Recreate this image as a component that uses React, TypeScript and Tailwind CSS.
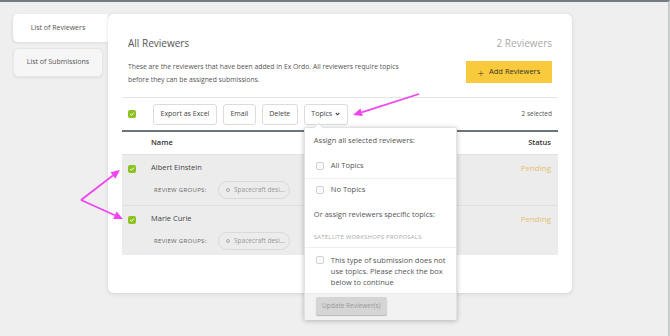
import React from 'react'

const font = "font-['Open_Sans',sans-serif]"

function GreenCheck() {
  return (
    <span className="flex h-[8px] w-[8px] items-center justify-center rounded-[2px] bg-[#8cc21f]">
      <svg width="6" height="6" viewBox="0 0 6 6">
        <path d="M1.2 3.1 L2.5 4.3 L4.9 1.6" stroke="white" strokeWidth="1" fill="none" />
      </svg>
    </span>
  )
}

function EmptyBox() {
  return <span className="block h-[8px] w-[8px] shrink-0 rounded-[2px] border border-[#cfcfcf] bg-white" />
}

function ToolButton({ children }: { children: React.ReactNode }) {
  return (
    <div className="flex h-[21px] items-center rounded-[3px] border border-[#dcdcdc] bg-white px-[6.5px] text-[7px] text-[#444]">
      {children}
    </div>
  )
}

function ReviewerRow({ name, first }: { name: string; first?: boolean }) {
  return (
    <div className={`flex h-[50px] bg-[#ececec] ${first ? '' : 'border-t border-[#e0e0e0]'}`}>
      <div className="w-[29px] pl-[6px] pt-[10px]">
        <GreenCheck />
      </div>
      <div className="flex-1">
        <div className="flex h-[26px] items-center text-[7.5px] text-[#444]">{name}</div>
        <div className="flex items-center pl-[3px]">
          <span className="w-[64px] text-[6px] tracking-[0.3px] text-[#666]">REVIEW GROUPS:</span>
          <span className="flex h-[18px] w-[72px] items-center gap-[4px] rounded-full border border-[#dadada] pl-[7px] text-[6.5px] text-[#999]">
            <span className="h-[4px] w-[4px] rounded-full border border-[#aaa]" />
            Spacecraft desi...
          </span>
        </div>
      </div>
      <div className="flex h-[26px] items-center pr-[7px] text-[8px] text-[#e6bf70]">Pending</div>
    </div>
  )
}

function TopicsMenu() {
  return (
    <div className="absolute left-0 top-full z-10 mt-[2px] h-[193px] w-[153px] rounded-[2px] border border-[#e2e2e2] bg-white shadow-[0_1px_5px_rgba(0,0,0,0.25)]">
      <span className="absolute -top-[4px] left-[10px] h-[7px] w-[7px] rotate-45 border-l border-t border-[#e2e2e2] bg-white" />
      <div className="flex h-[27px] items-center pl-[9px] text-[7.5px] text-[#555]">Assign all selected reviewers:</div>
      <div className="flex h-[24px] items-center gap-[7px] border-b border-[#f0f0f0] pl-[11px] text-[7.5px] text-[#555]">
        <EmptyBox />
        All Topics
      </div>
      <div className="flex h-[22px] items-center gap-[7px] pl-[11px] text-[7.5px] text-[#555]">
        <EmptyBox />
        No Topics
      </div>
      <div className="flex h-[28px] items-center pl-[9px] text-[7.5px] text-[#555]">Or assign reviewers specific topics:</div>
      <div className="flex h-[19px] items-center border-b border-[#eeeeee] pl-[9px] text-[6px] tracking-[0.2px] text-[#aaa]">
        SATELLITE WORKSHOPS PROPOSALS
      </div>
      <div className="flex h-[45px] gap-[7px] pl-[11px] pt-[7px]">
        <span className="mt-[1px]">
          <EmptyBox />
        </span>
        <p className="w-[115px] text-[7.5px] leading-[11px] text-[#555]">
          This type of submission does not use topics. Please check the box below to continue
        </p>
      </div>
      <div className="h-[27px] border-t border-[#ececec] bg-[#f2f2f2] pl-[11px] pt-[3px]">
        <div className="flex h-[18px] w-[71px] items-center justify-center rounded-[2px] bg-[#d5d5d5] text-[6.5px] text-[#999] shadow-[0_1px_1px_rgba(0,0,0,0.25)]">
          Update Reviewer(s)
        </div>
      </div>
    </div>
  )
}

function Arrows() {
  const c = '#f044f0'
  return (
    <svg className="pointer-events-none absolute left-0 top-0" width="670" height="336">
      <line x1="419" y1="92" x2="361.6" y2="110.3" stroke={c} strokeWidth="1.8" />
      <polygon points="353,113 362.8,114.1 360.4,106.5" fill={c} />
      <line x1="81" y1="198" x2="112.9" y2="173.5" stroke={c} strokeWidth="1.8" />
      <polygon points="120,168 115.3,176.7 110.5,170.3" fill={c} />
      <line x1="81" y1="198" x2="114.8" y2="213.3" stroke={c} strokeWidth="1.8" />
      <polygon points="123,217 113.2,216.9 116.5,209.6" fill={c} />
    </svg>
  )
}

export default function App() {
  return (
    <div className={`relative h-[336px] w-[670px] overflow-hidden border-r-2 border-t-2 border-r-[#c9cccd] border-t-[#737b80] bg-[#efefef] ${font}`}>
      <div className="flex items-start pl-[13px] pt-[12px]">
        <div className="flex w-[95px] flex-col">
          <div className="flex h-[28px] items-center justify-center rounded-l-[5px] bg-white pr-[5px] text-[7px] text-[#555] shadow-[-1px_1px_3px_rgba(0,0,0,0.08)]">
            List of Reviewers
          </div>
          <div className="mt-[6px] flex h-[29px] w-[90px] items-center justify-center rounded-[5px] border border-[#e6e6e6] bg-[#f6f6f6] text-[7px] text-[#555] shadow-[0_1px_2px_rgba(0,0,0,0.08)]">
            List of Submissions
          </div>
        </div>

        <div className="h-[279px] w-[464px] rounded-[6px] bg-white px-[14px] shadow-[0_1px_4px_rgba(0,0,0,0.12)]">
          <div className="h-[84px] border-b border-[#e6e6e6] px-[6px]">
            <div className="flex justify-between pt-[22px] text-[10px] leading-[14px]">
              <span className="text-[#555]">All Reviewers</span>
              <span className="text-[#aaa]">2 Reviewers</span>
            </div>
            <div className="mt-[10px] flex items-start justify-between">
              <p className="w-[285px] text-[6.8px] leading-[13px] text-[#555]">
                These are the reviewers that have been added in Ex Ordo. All reviewers require topics before they can be assigned submissions.
              </p>
              <div className="mt-[1px] flex h-[22px] w-[86px] items-center justify-center gap-[5px] bg-[#f9ca3b] text-[7.5px] text-[#333]">
                <span className="text-[11px] font-light leading-none">+</span>
                Add Reviewers
              </div>
            </div>
          </div>

          <div className="flex h-[34px] items-center border-b-2 border-[#6c757c] px-[6px]">
            <span className="w-[25px]">
              <GreenCheck />
            </span>
            <div className="flex gap-[6px]">
              <ToolButton>Export as Excel</ToolButton>
              <ToolButton>Email</ToolButton>
              <ToolButton>Delete</ToolButton>
              <div className="relative">
                <ToolButton>
                  Topics
                  <svg className="ml-[3px]" width="5" height="4" viewBox="0 0 5 4">
                    <path d="M0.8 1 L2.5 2.8 L4.2 1" stroke="#444" strokeWidth="1.1" fill="none" />
                  </svg>
                </ToolButton>
                <TopicsMenu />
              </div>
            </div>
            <span className="ml-auto text-[6.5px] text-[#555]">2 selected</span>
          </div>

          <div className="flex h-[23px] items-center justify-between border-b border-[#e4e4e4] pl-[29px] pr-[7px] text-[7.5px] font-semibold text-[#333]">
            <span>Name</span>
            <span>Status</span>
          </div>

          <ReviewerRow name="Albert Einstein" first />
          <ReviewerRow name="Marie Curie" />
        </div>
      </div>
      <Arrows />
    </div>
  )
}
